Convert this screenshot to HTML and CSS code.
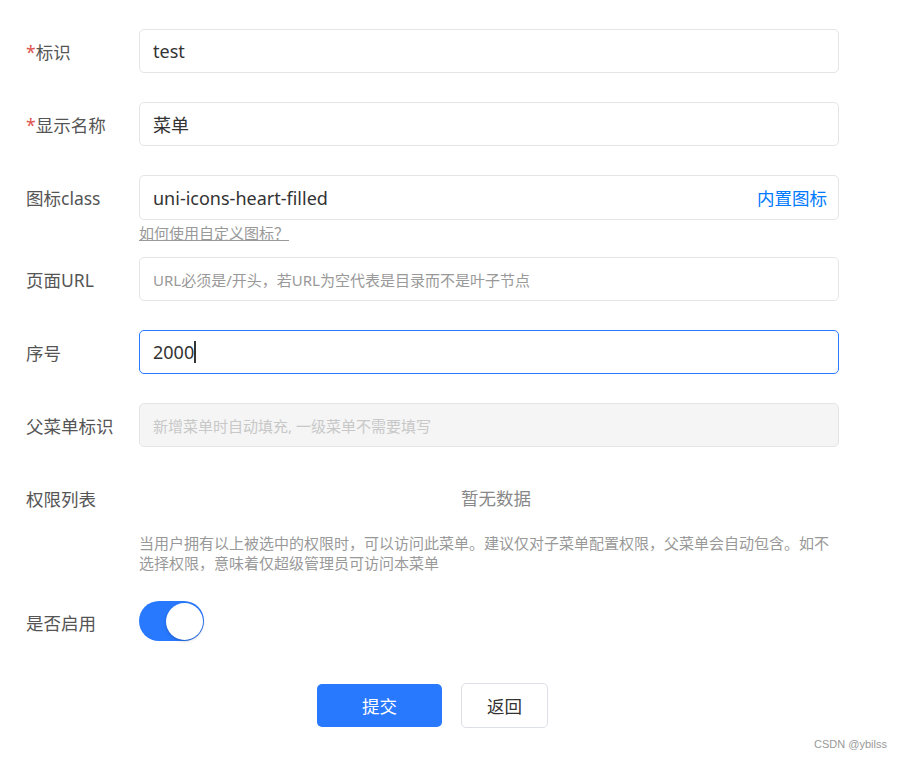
FILE: index.html
```html
<!DOCTYPE html>
<html lang="zh-CN">
<head>
  <meta charset="UTF-8" />
  <meta name="viewport" content="width=device-width, initial-scale=1.0"/>
  <title>编辑菜单</title>
  <link rel="stylesheet" href="styles.css">
</head>
<body>
  <form class="form">
    <div class="row">
      <label class="label"><span class="req">*</span>标识</label>
      <div class="field">
        <input class="input" type="text" value="test" />
      </div>
    </div>

    <div class="row">
      <label class="label"><span class="req">*</span>显示名称</label>
      <div class="field">
        <input class="input" type="text" value="菜单" />
      </div>
    </div>

    <div class="row row-tight">
      <label class="label">图标class</label>
      <div class="field">
        <div class="input input-group">
          <input class="inner" type="text" value="uni-icons-heart-filled" />
          <a class="suffix">内置图标</a>
        </div>
        <a class="help-link">如何使用自定义图标？</a>
      </div>
    </div>

    <div class="row">
      <label class="label">页面URL</label>
      <div class="field">
        <input class="input" type="text" placeholder="URL必须是/开头，若URL为空代表是目录而不是叶子节点" />
      </div>
    </div>

    <div class="row">
      <label class="label">序号</label>
      <div class="field">
        <div class="input is-focus"><span>2000</span><i class="caret"></i></div>
      </div>
    </div>

    <div class="row">
      <label class="label">父菜单标识</label>
      <div class="field">
        <input class="input" type="text" disabled placeholder="新增菜单时自动填充, 一级菜单不需要填写" />
      </div>
    </div>

    <div class="row row-perm">
      <label class="label">权限列表</label>
      <div class="field">
        <div class="empty">暂无数据</div>
        <p class="tip">当用户拥有以上被选中的权限时，可以访问此菜单。建议仅对子菜单配置权限，父菜单会自动包含。如不选择权限，意味着仅超级管理员可访问本菜单</p>
      </div>
    </div>

    <div class="row row-switch">
      <label class="label label-switch">是否启用</label>
      <div class="field">
        <div class="switch is-on"><span class="knob"></span></div>
      </div>
    </div>

    <div class="actions">
      <button type="button" class="btn btn-primary">提交</button>
      <button type="button" class="btn">返回</button>
    </div>
  </form>

  <div class="watermark">CSDN @ybilss</div>
</body>
</html>
```

FILE: styles.css
```css
body {
  margin: 0;
  font-family: "Noto Sans", "Noto Sans CJK SC", sans-serif;
  background: #fff;
  color: #333;
}
.form {
  width: 813px;
  padding: 29px 0 0 26px;
}
.row {
  display: flex;
  align-items: flex-start;
  margin-bottom: 29px;
}
.row-tight {
  margin-bottom: 14px;
}
.row-perm {
  margin-bottom: 28px;
}
.row-switch {
  margin-bottom: 42px;
}
.label {
  width: 113px;
  flex: none;
  height: 44px;
  box-sizing: border-box;
  padding-top: 1px;
  line-height: 44px;
  font-size: 17.5px;
  color: #555;
}
.label-switch {
  height: 40px;
  line-height: 42px;
}
.req {
  color: #dd524d;
}
.field {
  flex: 1;
  min-width: 0;
}
.input {
  display: flex;
  align-items: center;
  width: 100%;
  height: 44px;
  box-sizing: border-box;
  padding: 0 13px;
  border: 1px solid #e5e5e5;
  border-radius: 5px;
  background: #fff;
  font-family: inherit;
  font-size: 18px;
  color: #333;
  outline: none;
}
.input::placeholder {
  font-size: 15px;
  color: #999;
}
.input:disabled {
  background: #f5f5f5;
}
.input:disabled::placeholder {
  color: #c8c8c8;
}
.input-group {
  height: 45px;
  padding-right: 11px;
}
.input-group .inner {
  flex: 1;
  min-width: 0;
  border: none;
  padding: 0;
  font-family: inherit;
  font-size: 18px;
  color: #333;
  outline: none;
}
.suffix {
  font-size: 17.5px;
  color: #007aff;
  cursor: pointer;
}
.help-link {
  display: block;
  margin-top: 3px;
  font-size: 15px;
  line-height: 20px;
  color: #999;
  text-decoration: underline;
}
.is-focus {
  border-color: #2979ff;
}
.caret {
  display: inline-block;
  width: 2px;
  height: 22px;
  background: #333;
}
.empty {
  height: 44px;
  box-sizing: border-box;
  padding: 0 0 0 14px;
  line-height: 44px;
  text-align: center;
  font-size: 17.5px;
  color: #888;
}
.tip {
  margin: 13px 0 0;
  padding-right: 6px;
  font-size: 15px;
  line-height: 20px;
  color: #999;
}
.switch {
  display: flex;
  justify-content: flex-end;
  align-items: center;
  width: 65px;
  height: 40px;
  box-sizing: border-box;
  padding: 0 1px;
  border-radius: 20px;
  background: #2979ff;
}
.knob {
  width: 37px;
  height: 37px;
  border-radius: 50%;
  background: #fff;
  box-shadow: 0 1px 3px rgba(0, 0, 0, 0.25);
}
.actions {
  display: flex;
  justify-content: center;
  align-items: center;
  gap: 19px;
}
.btn {
  width: 87px;
  height: 45px;
  border: 1px solid #dcdfe6;
  border-radius: 5px;
  background: #fff;
  font-family: inherit;
  font-size: 17.5px;
  color: #333;
  cursor: pointer;
}
.btn-primary {
  width: 125px;
  height: 43px;
  border: none;
  background: #2979ff;
  color: #fff;
}
.watermark {
  position: absolute;
  right: 15px;
  top: 738px;
  font-family: "Liberation Sans", Arial, sans-serif;
  font-size: 11px;
  color: #999;
}
```
